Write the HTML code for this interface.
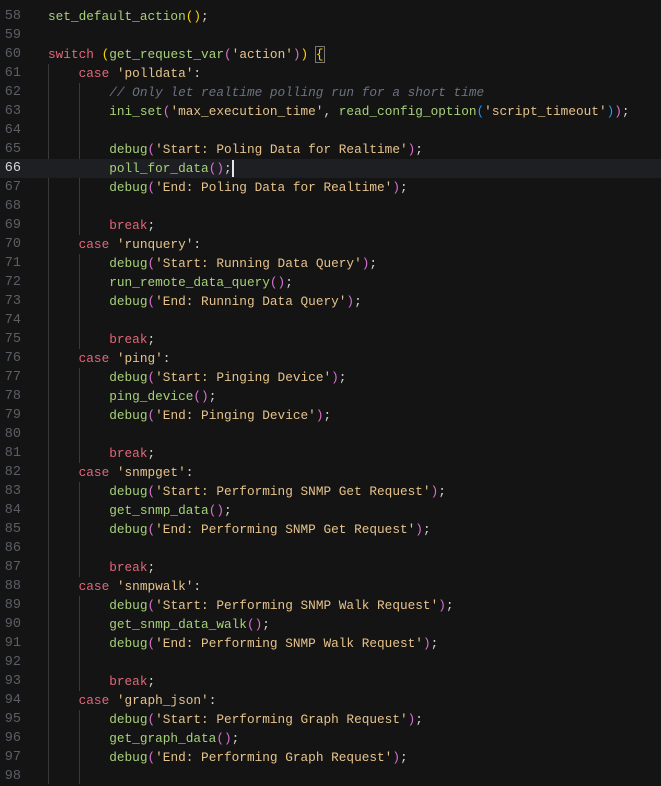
<!DOCTYPE html>
<html><head><meta charset="utf-8"><style>
body{margin:0;background:#141414;width:661px;height:784px;overflow:hidden;font-family:"Liberation Mono",monospace;font-size:12.75px;}
.w{position:absolute;top:7px;left:0;right:0}
.l{height:19px;line-height:19px;white-space:pre;position:relative;color:#d4d4d4}
.n{position:absolute;left:0;width:21px;text-align:right;color:#5a5f66;font-size:13.5px}
.c{position:absolute;left:48px}
.cur{background:#1e1f22}
.cur .n{color:#d6d6d6}
.f{color:#a6d17a}.s{color:#e6c38c}.k{color:#e26779}.m{color:#6b7280;font-style:italic}
.p1{color:#ffd700}.p2{color:#da70d6}.p3{color:#179fff}.d{color:#d4d4d4}
.g{position:absolute;width:1px;background:#3a3a3a}
.caret{display:inline-block;width:2px;height:17px;background:#e6e6e6;vertical-align:middle}
</style></head><body>
<div class="g" style="left:48px;top:64px;height:720px"></div>
<div class="g" style="left:79px;top:83px;height:152px"></div>
<div class="g" style="left:79px;top:254px;height:95px"></div>
<div class="g" style="left:79px;top:368px;height:95px"></div>
<div class="g" style="left:79px;top:482px;height:95px"></div>
<div class="g" style="left:79px;top:596px;height:95px"></div>
<div class="g" style="left:79px;top:710px;height:74px"></div>
<div class="w">
<div class="l"><span class="n">58</span><span class="c"><span class="f">set_default_action</span><span class="p1">()</span>;</span></div>
<div class="l"><span class="n">59</span></div>
<div class="l"><span class="n">60</span><span class="c"><span class="k">switch</span> <span class="p1">(</span><span class="f">get_request_var</span><span class="p2">(</span><span class="s">'action'</span><span class="p2">)</span><span class="p1">)</span> <span class="p1" style="outline:1px solid #777">{</span></span></div>
<div class="l"><span class="n">61</span><span class="c">    <span class="k">case</span> <span class="s">'polldata'</span>:</span></div>
<div class="l"><span class="n">62</span><span class="c">        <span class="m">// Only let realtime polling run for a short time</span></span></div>
<div class="l"><span class="n">63</span><span class="c">        <span class="f">ini_set</span><span class="p2">(</span><span class="s">'max_execution_time'</span>, <span class="f">read_config_option</span><span class="p3">(</span><span class="s">'script_timeout'</span><span class="p3">)</span><span class="p2">)</span>;</span></div>
<div class="l"><span class="n">64</span></div>
<div class="l"><span class="n">65</span><span class="c">        <span class="f">debug</span><span class="p2">(</span><span class="s">'Start: Poling Data for Realtime'</span><span class="p2">)</span>;</span></div>
<div class="l cur"><span class="n">66</span><span class="c">        <span class="f">poll_for_data</span><span class="p2">()</span>;<span class="caret"></span></span></div>
<div class="l"><span class="n">67</span><span class="c">        <span class="f">debug</span><span class="p2">(</span><span class="s">'End: Poling Data for Realtime'</span><span class="p2">)</span>;</span></div>
<div class="l"><span class="n">68</span></div>
<div class="l"><span class="n">69</span><span class="c">        <span class="k">break</span>;</span></div>
<div class="l"><span class="n">70</span><span class="c">    <span class="k">case</span> <span class="s">'runquery'</span>:</span></div>
<div class="l"><span class="n">71</span><span class="c">        <span class="f">debug</span><span class="p2">(</span><span class="s">'Start: Running Data Query'</span><span class="p2">)</span>;</span></div>
<div class="l"><span class="n">72</span><span class="c">        <span class="f">run_remote_data_query</span><span class="p2">()</span>;</span></div>
<div class="l"><span class="n">73</span><span class="c">        <span class="f">debug</span><span class="p2">(</span><span class="s">'End: Running Data Query'</span><span class="p2">)</span>;</span></div>
<div class="l"><span class="n">74</span></div>
<div class="l"><span class="n">75</span><span class="c">        <span class="k">break</span>;</span></div>
<div class="l"><span class="n">76</span><span class="c">    <span class="k">case</span> <span class="s">'ping'</span>:</span></div>
<div class="l"><span class="n">77</span><span class="c">        <span class="f">debug</span><span class="p2">(</span><span class="s">'Start: Pinging Device'</span><span class="p2">)</span>;</span></div>
<div class="l"><span class="n">78</span><span class="c">        <span class="f">ping_device</span><span class="p2">()</span>;</span></div>
<div class="l"><span class="n">79</span><span class="c">        <span class="f">debug</span><span class="p2">(</span><span class="s">'End: Pinging Device'</span><span class="p2">)</span>;</span></div>
<div class="l"><span class="n">80</span></div>
<div class="l"><span class="n">81</span><span class="c">        <span class="k">break</span>;</span></div>
<div class="l"><span class="n">82</span><span class="c">    <span class="k">case</span> <span class="s">'snmpget'</span>:</span></div>
<div class="l"><span class="n">83</span><span class="c">        <span class="f">debug</span><span class="p2">(</span><span class="s">'Start: Performing SNMP Get Request'</span><span class="p2">)</span>;</span></div>
<div class="l"><span class="n">84</span><span class="c">        <span class="f">get_snmp_data</span><span class="p2">()</span>;</span></div>
<div class="l"><span class="n">85</span><span class="c">        <span class="f">debug</span><span class="p2">(</span><span class="s">'End: Performing SNMP Get Request'</span><span class="p2">)</span>;</span></div>
<div class="l"><span class="n">86</span></div>
<div class="l"><span class="n">87</span><span class="c">        <span class="k">break</span>;</span></div>
<div class="l"><span class="n">88</span><span class="c">    <span class="k">case</span> <span class="s">'snmpwalk'</span>:</span></div>
<div class="l"><span class="n">89</span><span class="c">        <span class="f">debug</span><span class="p2">(</span><span class="s">'Start: Performing SNMP Walk Request'</span><span class="p2">)</span>;</span></div>
<div class="l"><span class="n">90</span><span class="c">        <span class="f">get_snmp_data_walk</span><span class="p2">()</span>;</span></div>
<div class="l"><span class="n">91</span><span class="c">        <span class="f">debug</span><span class="p2">(</span><span class="s">'End: Performing SNMP Walk Request'</span><span class="p2">)</span>;</span></div>
<div class="l"><span class="n">92</span></div>
<div class="l"><span class="n">93</span><span class="c">        <span class="k">break</span>;</span></div>
<div class="l"><span class="n">94</span><span class="c">    <span class="k">case</span> <span class="s">'graph_json'</span>:</span></div>
<div class="l"><span class="n">95</span><span class="c">        <span class="f">debug</span><span class="p2">(</span><span class="s">'Start: Performing Graph Request'</span><span class="p2">)</span>;</span></div>
<div class="l"><span class="n">96</span><span class="c">        <span class="f">get_graph_data</span><span class="p2">()</span>;</span></div>
<div class="l"><span class="n">97</span><span class="c">        <span class="f">debug</span><span class="p2">(</span><span class="s">'End: Performing Graph Request'</span><span class="p2">)</span>;</span></div>
<div class="l"><span class="n">98</span></div>
</div>
</body></html>
